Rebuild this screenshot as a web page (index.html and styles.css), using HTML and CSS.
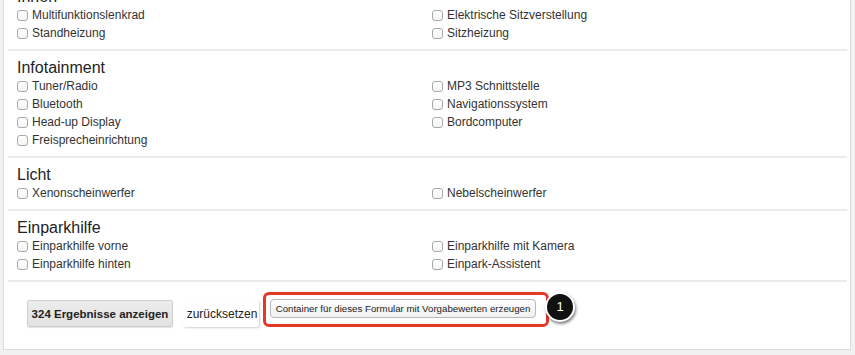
FILE: index.html
```html
<!DOCTYPE html>
<html lang="de">
<head>
<meta charset="utf-8">
<title>Ausstattung</title>
<link rel="stylesheet" href="styles.css">
</head>
<body>
<div class="panel">
  <section class="group">
    <h3 class="group-title">Innen</h3>
    <div class="options">
      <label class="opt"><input type="checkbox" class="cb">Multifunktionslenkrad</label>
      <label class="opt"><input type="checkbox" class="cb">Elektrische Sitzverstellung</label>
      <label class="opt"><input type="checkbox" class="cb">Standheizung</label>
      <label class="opt"><input type="checkbox" class="cb">Sitzheizung</label>
    </div>
  </section>
  <section class="group">
    <h3 class="group-title">Infotainment</h3>
    <div class="options">
      <label class="opt"><input type="checkbox" class="cb">Tuner/Radio</label>
      <label class="opt"><input type="checkbox" class="cb">MP3 Schnittstelle</label>
      <label class="opt"><input type="checkbox" class="cb">Bluetooth</label>
      <label class="opt"><input type="checkbox" class="cb">Navigationssystem</label>
      <label class="opt"><input type="checkbox" class="cb">Head-up Display</label>
      <label class="opt"><input type="checkbox" class="cb">Bordcomputer</label>
      <label class="opt"><input type="checkbox" class="cb">Freisprecheinrichtung</label>
    </div>
  </section>
  <section class="group">
    <h3 class="group-title">Licht</h3>
    <div class="options">
      <label class="opt"><input type="checkbox" class="cb">Xenonscheinwerfer</label>
      <label class="opt"><input type="checkbox" class="cb">Nebelscheinwerfer</label>
    </div>
  </section>
  <section class="group">
    <h3 class="group-title">Einparkhilfe</h3>
    <div class="options">
      <label class="opt"><input type="checkbox" class="cb">Einparkhilfe vorne</label>
      <label class="opt"><input type="checkbox" class="cb">Einparkhilfe mit Kamera</label>
      <label class="opt"><input type="checkbox" class="cb">Einparkhilfe hinten</label>
      <label class="opt"><input type="checkbox" class="cb">Einpark-Assistent</label>
    </div>
  </section>
  <div class="actions">
    <button class="btn btn-primary" type="button">324 Ergebnisse anzeigen</button>
    <button class="btn btn-reset" type="button">zurücksetzen</button>
    <div class="highlight">
      <button class="btn btn-small" type="button">Container für dieses Formular mit Vorgabewerten erzeugen</button>
      <span class="badge">1</span>
    </div>
  </div>
</div>
</body>
</html>
```

FILE: styles.css
```css
html, body {
  margin: 0;
  padding: 0;
}
body {
  background: #f1f1f1;
  font-family: "Liberation Sans", Arial, sans-serif;
  color: #333;
  padding: 0 4px 0 3px;
  height: 355px;
  overflow: hidden;
}
.panel {
  margin-top: -21px;
  background: #fff;
  border: 1px solid #dadada;
  padding: 0 3px 0 4px;
}
.group {
  padding: 7px 9px 7px 9px;
  border-bottom: 2px solid #ebebeb;
}
.group-title {
  margin: 0;
  font-size: 16px;
  line-height: 19px;
  font-weight: normal;
  color: #222;
}
.options {
  display: grid;
  grid-template-columns: 415px 1fr;
}
.opt {
  display: flex;
  align-items: center;
  height: 18px;
  font-size: 12px;
  color: #333;
  white-space: nowrap;
}
.cb {
  -webkit-appearance: none;
  appearance: none;
  box-sizing: border-box;
  width: 11px;
  height: 11px;
  margin: 0 4px 0 0;
  border: 1px solid #a9a9a9;
  border-radius: 3px;
  background: linear-gradient(#fff, #f4f4f4);
}
.actions {
  display: flex;
  align-items: flex-start;
  padding: 10px 0 22px 19px;
}
.btn {
  font-family: "Liberation Sans", Arial, sans-serif;
  color: #222;
  cursor: pointer;
  box-sizing: border-box;
  margin: 0;
  white-space: nowrap;
}
.btn-primary {
  margin-top: 8px;
  height: 27px;
  width: 146px;
  padding: 0;
  font-size: 11.5px;
  font-weight: bold;
  background: linear-gradient(#ececec, #e2e2e2);
  border: 1px solid #d0d0d0;
  border-radius: 2px;
  box-shadow: 0 1px 1px rgba(0,0,0,0.12);
}
.btn-reset {
  margin: 8px 0 0 10px;
  height: 27px;
  width: 76px;
  padding: 0 0 0 2px;
  font-size: 12px;
  background: #fff;
  border: none;
  border-radius: 3px;
  box-shadow: 1px 1px 2px rgba(0,0,0,0.18);
}
.highlight {
  position: relative;
  margin-left: 4px;
  height: 35px;
  box-sizing: border-box;
  border: 3px solid #e2392b;
  border-radius: 6px;
  padding: 4px 10px 0 4px;
}
.btn-small {
  display: block;
  height: 19px;
  width: 266px;
  padding: 0;
  font-size: 9.7px;
  background: linear-gradient(#fdfdfd, #f1f1f1);
  border: 1px solid #b9b9b9;
  border-radius: 4px;
}
.badge {
  position: absolute;
  left: calc(100% - 1px);
  top: -3px;
  width: 26px;
  height: 26px;
  border: 2px solid #fff;
  border-radius: 50%;
  background: #111;
  color: #fff;
  font-size: 13px;
  line-height: 26px;
  text-align: center;
  box-shadow: 1px 2px 3px rgba(0,0,0,0.5);
}
```
